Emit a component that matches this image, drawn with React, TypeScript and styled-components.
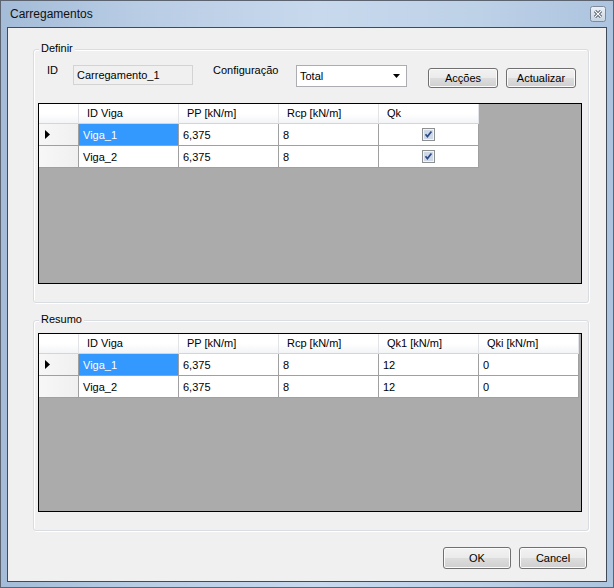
import React from 'react';
import styled, { createGlobalStyle } from 'styled-components';

type Cell = string | boolean;

type GridProps = {
  columns: string[];
  rows: Cell[][];
  height: number;
};

const GlobalStyle = createGlobalStyle`
  * {
    box-sizing: border-box;
  }
  html,
  body {
    margin: 0;
    padding: 0;
    background: #f0f0f0;
  }
  body {
    font-family: 'Liberation Sans', Arial, sans-serif;
    font-size: 11px;
    color: #000;
  }
`;

const Window = styled.div`
  width: 614px;
  height: 588px;
  display: flex;
  flex-direction: column;
  border: 1px solid #5b6470;
  padding: 0 6px 5px;
  background: linear-gradient(
    to right,
    #a4bcd8 0%,
    #b8cce4 22%,
    #c8d9ed 52%,
    #bdd1e7 78%,
    #adc4df 100%
  );
`;

const TitleBar = styled.div`
  height: 26px;
  flex: none;
  display: flex;
  align-items: center;
  justify-content: space-between;
  padding-left: 3px;
`;

const Title = styled.span`
  font-size: 12px;
  color: #111;
`;

const CloseButton = styled.div`
  width: 16px;
  height: 16px;
  margin-right: 1px;
  display: flex;
`;

const Client = styled.div`
  flex: 1;
  display: flex;
  flex-direction: column;
  border: 1px solid #3f4b58;
  background: #f0f0f0;
`;

const GroupBox = styled.div<{ $top: number; $padTop: number }>`
  position: relative;
  margin: ${(p) => p.$top}px 17px 0 25px;
  padding: ${(p) => p.$padTop}px 0 18px 4px;
  border: 1px solid #d9dde1;
  border-radius: 3px;
  box-shadow: inset 1px 1px 0 #fff, 1px 1px 0 #fff;
`;

const Caption = styled.span`
  position: absolute;
  top: -9px;
  left: 5px;
  padding: 0 2px;
  line-height: 14px;
  background: #f0f0f0;
`;

const FormRow = styled.div`
  height: 23px;
  display: flex;
  align-items: flex-start;
`;

const FieldLabel = styled.span<{ $width: number; $left: number }>`
  width: ${(p) => p.$width}px;
  margin-left: ${(p) => p.$left}px;
  margin-top: -2px;
  line-height: 14px;
`;

const ReadOnlyField = styled.div`
  width: 120px;
  height: 20px;
  padding-left: 3px;
  line-height: 18px;
  border: 1px solid #d3d3d3;
  background: #f0f0f0;
`;

const Select = styled.div`
  width: 111px;
  height: 22px;
  display: flex;
  align-items: center;
  justify-content: space-between;
  padding: 0 6px 0 3px;
  border: 1px solid #abadb3;
  background: #fff;
`;

const Button = styled.button<{ $width: number; $left: number; $top?: number }>`
  width: ${(p) => p.$width}px;
  height: ${(p) => (p.$top ? 20 : 22)}px;
  margin-left: ${(p) => p.$left}px;
  margin-top: ${(p) => p.$top ?? 0}px;
  padding: 0;
  font-family: inherit;
  font-size: 11px;
  color: #000;
  border: 1px solid #707070;
  border-radius: 3px;
  box-shadow: inset 0 0 0 1px #fbfbfb;
  background: linear-gradient(to bottom, #f2f2f2 0%, #ebebeb 48%, #dddddd 52%, #cfcfcf 100%);
`;

const Grid = styled.div<{ $height: number }>`
  width: 544px;
  height: ${(p) => p.$height}px;
  border: 1px solid #000;
  background: #ababab;
`;

const GridRow = styled.div<{ $header?: boolean }>`
  display: flex;
  height: ${(p) => (p.$header ? 20 : 22)}px;
`;

const HeaderCell = styled.div<{ $width: number }>`
  width: ${(p) => p.$width}px;
  padding-left: 8px;
  line-height: 19px;
  border-right: 1px solid #e1e3e6;
  border-bottom: 1px solid #d5d5d5;
  background: linear-gradient(to bottom, #ffffff 0%, #ffffff 50%, #f3f4f6 100%);
`;

const RowHeader = styled.div`
  width: 40px;
  display: flex;
  align-items: center;
  padding-left: 6px;
  border-right: 1px solid #a0a0a0;
  border-bottom: 1px solid #a0a0a0;
  background: linear-gradient(to right, #f7f7f7, #f0f0f0);
`;

const DataCell = styled.div<{ $selected?: boolean; $center?: boolean }>`
  width: 100px;
  display: flex;
  align-items: center;
  justify-content: ${(p) => (p.$center ? 'center' : 'flex-start')};
  padding-left: ${(p) => (p.$center ? 0 : 4)}px;
  border-right: 1px solid #a0a0a0;
  border-bottom: 1px solid #a0a0a0;
  background: ${(p) => (p.$selected ? '#3399ff' : '#fff')};
  color: ${(p) => (p.$selected ? '#fff' : '#000')};
`;

const Footer = styled.div`
  display: flex;
  justify-content: flex-end;
  gap: 8px;
  margin-top: 16px;
  padding-right: 19px;
`;

const CheckBox = () => (
  <svg width="13" height="13" viewBox="0 0 13 13">
    <rect x="0.5" y="0.5" width="12" height="12" fill="#f4f4f4" stroke="#8e8f8f" />
    <rect x="2" y="2" width="9" height="9" fill="#cfd8e6" />
    <path d="M3.5 6.2 L5.4 8.6 L9.4 3.4" fill="none" stroke="#2e4a86" strokeWidth="1.7" />
  </svg>
);

const DataGrid: React.FC<GridProps> = ({ columns, rows, height }) => (
  <Grid $height={height}>
    <GridRow $header>
      <HeaderCell $width={40} />
      {columns.map((c) => (
        <HeaderCell key={c} $width={100}>
          {c}
        </HeaderCell>
      ))}
    </GridRow>
    {rows.map((row, i) => (
      <GridRow key={i}>
        <RowHeader>
          {i === 0 && (
            <svg width="5" height="9" viewBox="0 0 5 9">
              <path d="M0 0 L5 4.5 L0 9 Z" fill="#000" />
            </svg>
          )}
        </RowHeader>
        {row.map((v, j) =>
          typeof v === 'boolean' ? (
            <DataCell key={j} $center>
              <CheckBox />
            </DataCell>
          ) : (
            <DataCell key={j} $selected={i === 0 && j === 0}>
              {v}
            </DataCell>
          )
        )}
      </GridRow>
    ))}
  </Grid>
);

const definirCols = ['ID Viga', 'PP [kN/m]', 'Rcp [kN/m]', 'Qk'];
const definirRows: Cell[][] = [
  ['Viga_1', '6,375', '8', true],
  ['Viga_2', '6,375', '8', true],
];

const resumoCols = ['ID Viga', 'PP [kN/m]', 'Rcp [kN/m]', 'Qk1 [kN/m]', 'Qki [kN/m]'];
const resumoRows: Cell[][] = [
  ['Viga_1', '6,375', '8', '12', '0'],
  ['Viga_2', '6,375', '8', '12', '0'],
];

const App: React.FC = () => {
  return (
    <>
      <GlobalStyle />
      <Window>
        <TitleBar>
          <Title>Carregamentos</Title>
          <CloseButton>
            <svg width="16" height="16" viewBox="0 0 16 16">
              <defs>
                <linearGradient id="cb" x1="0" y1="0" x2="0" y2="1">
                  <stop offset="0" stopColor="#eef2f8" />
                  <stop offset="1" stopColor="#c6d3e3" />
                </linearGradient>
              </defs>
              <rect x="0.5" y="0.5" width="15" height="15" rx="2" fill="url(#cb)" stroke="#7d8a9c" />
              <path d="M5 5 L11 11 M11 5 L5 11" stroke="#3a4656" strokeWidth="3" />
              <path d="M5 5 L11 11 M11 5 L5 11" stroke="#fff" strokeWidth="1.2" />
            </svg>
          </CloseButton>
        </TitleBar>
        <Client>
          <GroupBox $top={21} $padTop={15}>
            <Caption>Definir</Caption>
            <FormRow>
              <FieldLabel $width={26} $left={9}>
                ID
              </FieldLabel>
              <ReadOnlyField>Carregamento_1</ReadOnlyField>
              <FieldLabel $width={83} $left={20}>
                Configuração
              </FieldLabel>
              <Select>
                <span>Total</span>
                <svg width="7" height="4" viewBox="0 0 7 4">
                  <path d="M0 0 L7 0 L3.5 4 Z" fill="#000" />
                </svg>
              </Select>
              <Button $width={70} $left={21} $top={3}>
                Acções
              </Button>
              <Button $width={70} $left={8} $top={3}>
                Actualizar
              </Button>
            </FormRow>
            <div style={{ height: 15 }} />
            <DataGrid columns={definirCols} rows={definirRows} height={181} />
          </GroupBox>
          <GroupBox $top={17} $padTop={12}>
            <Caption>Resumo</Caption>
            <DataGrid columns={resumoCols} rows={resumoRows} height={179} />
          </GroupBox>
          <Footer>
            <Button $width={68} $left={0}>
              OK
            </Button>
            <Button $width={68} $left={0}>
              Cancel
            </Button>
          </Footer>
        </Client>
      </Window>
    </>
  );
};

export default App;
